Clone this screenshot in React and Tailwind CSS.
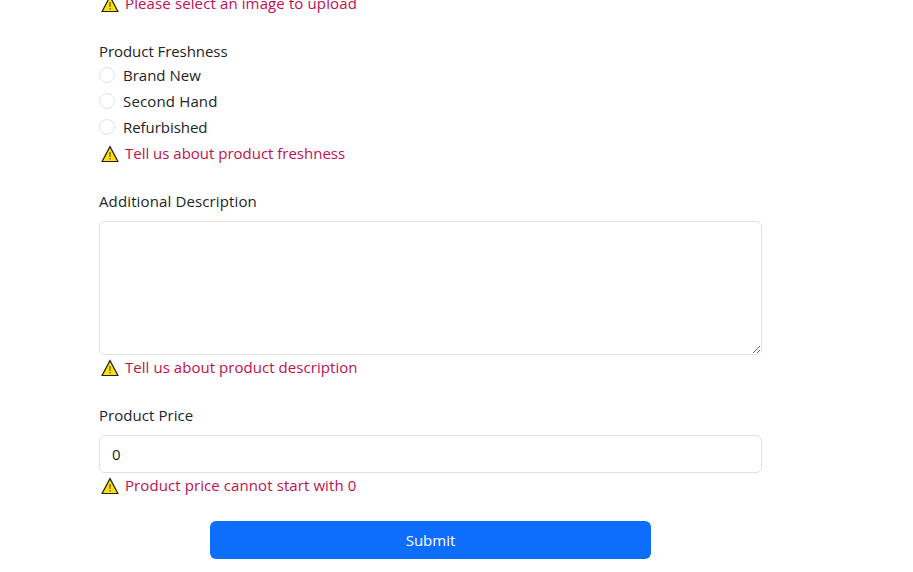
import React from "react";

function WarningIcon() {
  return (
    <svg className="mt-[2px] ml-[2px] mr-[6px] h-[18px] w-[18px] shrink-0" viewBox="0 0 18 18">
      <path d="M9 1.6 L16.9 16.5 H1.1 Z" fill="#ffe000" stroke="#222222" strokeWidth="1.2" strokeLinejoin="miter" />
      <path d="M9 7 V12 M9 13 V14.5" stroke="#4a4200" strokeWidth="1.1" fill="none" />
    </svg>
  );
}

function ErrorText({ children, spacing }) {
  return (
    <div className="flex h-6 items-center text-[#c0104f]">
      <WarningIcon />
      <span className={spacing}>{children}</span>
    </div>
  );
}

function Radio({ label, spacing }) {
  return (
    <label className="mb-[2px] flex h-6 items-center">
      <input type="radio" name="freshness" className="mr-2 h-4 w-4 appearance-none rounded-full border border-[#dee2e6] bg-white" />
      <span className={spacing}>{label}</span>
    </label>
  );
}

export default function App() {
  return (
    <div className="h-[572px] w-full overflow-hidden bg-white font-['Open_Sans','Noto_Sans',sans-serif] text-[15px] leading-6 text-[#212529]">
      <form className="-mt-[9px] ml-[99px] flex w-[663px] flex-col whitespace-nowrap">
        <ErrorText spacing="tracking-[0.12px]">Please select an image to upload</ErrorText>
        <div className="mt-6 h-6 tracking-[-0.06px]">Product Freshness</div>
        <Radio label="Brand New" spacing="tracking-[0px]" />
        <Radio label="Second Hand" spacing="tracking-[0.15px]" />
        <Radio label="Refurbished" spacing="tracking-[-0.05px]" />
        <ErrorText spacing="tracking-[-0.01px]">Tell us about product freshness</ErrorText>
        <label className="mt-6 h-6 tracking-[0.13px]">Additional Description</label>
        <textarea className="mt-2 block h-[134px] w-full resize-y rounded-md border border-[#dee2e6] bg-white px-3 py-1.5" />
        <ErrorText spacing="tracking-[0.05px]">Tell us about product description</ErrorText>
        <label className="mt-6 h-6 tracking-[0.05px]">Product Price</label>
        <input type="text" defaultValue="0" className="mt-2 h-[38px] w-full rounded-md border border-[#dee2e6] bg-white px-3 py-1.5" />
        <ErrorText spacing="tracking-[0.09px]">Product price cannot start with 0</ErrorText>
        <button type="button" className="mt-6 ml-[111px] h-[38px] w-[441px] rounded-md bg-[#0d6efd] text-center text-white">
          Submit
        </button>
      </form>
    </div>
  );
}
